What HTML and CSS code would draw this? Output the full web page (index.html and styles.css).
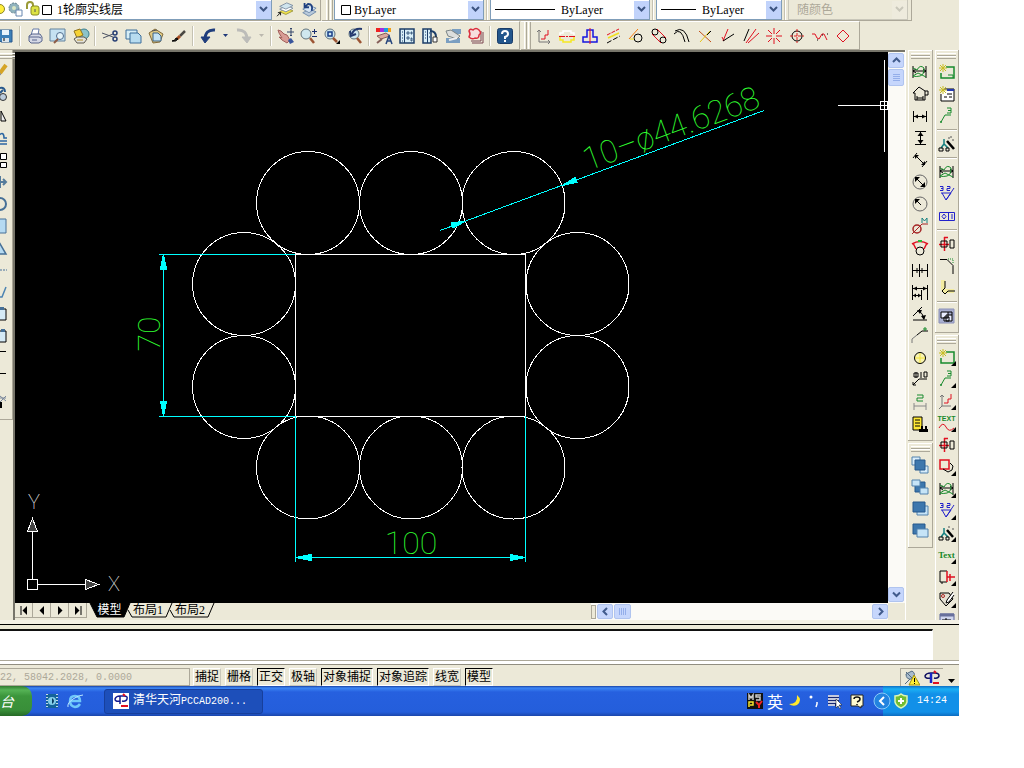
FILE: index.html
```html
<!DOCTYPE html>
<html lang="zh-CN">
<head>
<meta charset="utf-8">
<title>清华天河PCCAD</title>
<link rel="stylesheet" href="styles.css">
</head>
<body>
<div class="app">
  <header class="row-props">
    <div class="bar bar-layer">
      <div class="combo combo-layer">
        <svg class="layer-icons" viewBox="0 0 54 18"><circle cx="0" cy="8" r="4.500" fill="#ffee3b" stroke="#8b8425"/><circle cx="14" cy="7" r="5" fill="#8fb2bd" stroke="#62828e" stroke-dasharray="2 1"/><circle cx="14" cy="7" r="2" fill="#d8e6c3"/><path d="M16 9h6v6h-6z" fill="#fff" stroke="#6787b0"/><path d="M27 8V4q0-3 3-3t3 3v4" fill="none" stroke="#9a9a36" stroke-width="2"/><rect x="31" y="5" width="8" height="9" rx="2" fill="#dde344" stroke="#878a22"/><path d="M35 8v3" stroke="#555"/><path d="M42.500 4.500h9v9h-9z" fill="#fff" stroke="#000"/></svg>
        <select aria-label="图层"><option>1轮廓实线层</option></select>
        <span class="drop"><svg viewBox="0 0 9 7"><path d="M1 1l3.500 3.500L8 1"/></svg></span>
      </div>
      <button class="tool" aria-label="图层置为当前"><svg viewBox="0 0 18 18"><path d="M3 11l8-4 7 3-8 4z" fill="#f1e24a" stroke="#9b963f"/><path d="M3 8l8-4 7 3-8 4z" fill="#fff" stroke="#7b8ca0"/><path d="M3 5l8-4 7 3-8 4z" fill="#cfe4ee" stroke="#7b8ca0"/><path d="M0 16l4-4M1 12h3v3"/></svg></button>
      <button class="tool" aria-label="上一个图层"><svg viewBox="0 0 18 18"><path d="M2 12l8-4 7 3-8 5z" fill="#b9cadb" stroke="#6d88a8"/><path d="M2 8l8-4 7 3-8 5z" fill="#d8e7f5" stroke="#6d88a8"/><path d="M12 10q2-8-4-8L5 5M4 1v5h5" stroke="#1d3f80" stroke-width="2"/></svg></button>
    </div>
    <div class="bar bar-props">
      <span class="grip"></span>
      <div class="combo combo-color">
        <svg class="swatch" viewBox="0 0 10 10"><path d="M.5.500h9v9h-9z" fill="#fff" stroke="#000"/></svg>
        <select aria-label="颜色"><option>ByLayer</option></select>
        <span class="drop"><svg viewBox="0 0 9 7"><path d="M1 1l3.500 3.500L8 1"/></svg></span>
      </div>
      <span class="sep"></span>
      <div class="combo combo-type">
        <span class="line-sample"></span>
        <select aria-label="线型"><option>ByLayer</option></select>
        <span class="drop"><svg viewBox="0 0 9 7"><path d="M1 1l3.500 3.500L8 1"/></svg></span>
      </div>
      <span class="sep"></span>
      <div class="combo combo-weight">
        <span class="line-sample line-short"></span>
        <select aria-label="线宽"><option>ByLayer</option></select>
        <span class="drop"><svg viewBox="0 0 9 7"><path d="M1 1l3.500 3.500L8 1"/></svg></span>
      </div>
      <span class="sep"></span>
      <div class="combo combo-off">
        <select aria-label="打印样式" disabled><option>随颜色</option></select>
        <span class="drop"><svg viewBox="0 0 9 7"><path d="M1 1l3.500 3.500L8 1"/></svg></span>
      </div>
    </div>
  </header>

  <div class="row-tools">
    <div class="bar bar-std">
      <button class="tool" aria-label="保存"><svg viewBox="0 0 16 16"><path d="M1 2h13v12H3l-2-2z" fill="#3d80b8" stroke="#29598d"/><path d="M4 2h7v5H4z" fill="#e8f4fb" stroke="none"/><path d="M4 10h7v4H4z" fill="#dbe6ee" stroke="none"/><path d="M6 10v3"/></svg></button>
      <span class="sep"></span>
      <button class="tool" aria-label="打印"><svg viewBox="0 0 16 16"><path d="M4 7L6 1h6l-1 6" fill="#fff" stroke="#667ba8"/><path d="M2 8l3-2h8l2 3v4l-3 2H4l-2-2z" fill="#d5d9e6" stroke="#58658c"/><path d="M2 9h10l2 1M5 12h5" stroke="#58658c"/></svg></button>
      <button class="tool" aria-label="打印预览"><svg viewBox="0 0 16 16"><path d="M0 1h15v12H0z" fill="#c6e2f2" stroke="#62829d"/><circle cx="10" cy="8" r="3.500" fill="#e4f4fa" stroke="#516d8f"/><path d="M8 11l-4 4" stroke="#8d5b45" stroke-width="2"/></svg></button>
      <button class="tool" aria-label="发布"><svg viewBox="0 0 16 16"><circle cx="11" cy="6" r="5" fill="#8cc3c9" stroke="#3c7e8e"/><path d="M1 3l6-2 3 6-6 3z" fill="#f6d235" stroke="#91731d"/><path d="M1 11l3-2h7l3 2-3 4H4z" fill="#e3e2da" stroke="#5c5950"/><path d="M4 12h6" stroke="#b58d20"/></svg></button>
      <span class="sep"></span>
      <button class="tool" aria-label="剪切"><svg viewBox="0 0 16 16"><path d="M0 5l11 4M1 10l10-4" stroke="#4c5364"/><circle cx="13" cy="5" r="2" stroke="#273f74" stroke-width="1.500"/><circle cx="13" cy="11" r="2" stroke="#273f74" stroke-width="1.500"/></svg></button>
      <button class="tool" aria-label="复制"><svg viewBox="0 0 16 16"><path d="M1 2h11v9H1z" fill="#d5edf6" stroke="#3c6f9b"/><path d="M5 5h8l3 3v7H5z" fill="#b7dcf0" stroke="#3c6f9b"/></svg></button>
      <button class="tool" aria-label="粘贴"><svg viewBox="0 0 16 16"><path d="M1 5l6-4 8 5-3 8-7 1z" fill="#dfc984" stroke="#836b3a"/><path d="M5 5h5l3 3v5H5z" fill="#c4e3f4" stroke="#3c6385"/><path d="M4 3l5-1" stroke="#555"/></svg></button>
      <button class="tool" aria-label="特性匹配"><svg viewBox="0 0 16 16"><path d="M14 3L9 8" stroke="#4a4843" stroke-width="2.500"/><path d="M9 8l-3 3" stroke="#a84f23" stroke-width="3"/><path d="M7 11q-2 3-6 2 3 0 4-3z" fill="#222"/></svg></button>
      <span class="sep"></span>
      <button class="tool" aria-label="放弃"><svg viewBox="0 0 16 16"><path d="M15 2Q5 1 5 12" stroke="#1f3d7c" stroke-width="3"/><path d="M1 9l4 6 5-6z" fill="#1f3d7c" stroke="#1f3d7c"/></svg></button>
      <button class="tool tool-mini" aria-label="放弃列表"><svg viewBox="0 0 5 4"><path d="M0 0h5L2.500 3z" fill="#20397a" stroke="none"/></svg></button>
      <button class="tool" aria-label="重做" disabled><svg viewBox="0 0 16 16"><path d="M1 2Q11 1 11 12" stroke="#bcbcb9" stroke-width="3"/><path d="M6 9l5 6 4-6z" fill="#bcbcb9" stroke="#bcbcb9"/></svg></button>
      <button class="tool tool-mini" aria-label="重做列表" disabled><svg viewBox="0 0 5 4"><path d="M0 0h5L2.500 3z" fill="#bbb8ae" stroke="none"/></svg></button>
      <span class="sep"></span>
      <button class="tool" aria-label="实时平移"><svg viewBox="0 0 16 16"><path d="M0 2l3 1 3 3 3 1 3 5-3 3-5-3-3-3 3 1-3-5z" fill="#d99d95" stroke="#a4615c"/><path d="M10 12l3-2 3 4-4 2z" fill="#38559b" stroke="none"/><path d="M13 0v8M9 4h7M12 1l1-1 1 1M12 7l1 1 1-1" stroke="#33446a"/></svg></button>
      <button class="tool" aria-label="实时缩放"><svg viewBox="0 0 16 16"><circle cx="5" cy="6" r="5" fill="#cfe7ef" stroke="#61727c"/><path d="M9 10l4 5" stroke="#9b5433" stroke-width="2.500"/><path d="M11 3.500h5M13.500 1v5M11 8.500h5" stroke="#1a2f6e"/></svg></button>
      <button class="tool" aria-label="窗口缩放"><svg viewBox="0 0 16 16"><circle cx="6" cy="6" r="5" fill="#cfe7ef" stroke="#61727c"/><path d="M4 4h4v4H4z" stroke="#173d86" stroke-width="1.500"/><path d="M9 10l4 4" stroke="#9b5433" stroke-width="2.500"/><path d="M16 12v4h-4z" fill="#000" stroke="none"/></svg></button>
      <button class="tool" aria-label="缩放上一个"><svg viewBox="0 0 16 16"><circle cx="7" cy="6" r="5" fill="#cfe7ef" stroke="#61727c"/><path d="M10 10l4 5" stroke="#9b5433" stroke-width="2.500"/><path d="M15 1Q7 0 5 6M3 3l1 5 5-2" stroke="#24396f" stroke-width="2"/></svg></button>
      <span class="sep"></span>
      <button class="tool" aria-label="特性"><svg viewBox="0 0 16 16"><path d="M0 0h4v4H0z" fill="#e22" stroke="none"/><path d="M4 0h4v4H4z" fill="#a32de0" stroke="none"/><path d="M8 0h4v4H8z" fill="#1a9fe0" stroke="none"/><path d="M12 0h3v4h-3z" fill="#ef9f1a" stroke="none"/><path d="M1 8l9-3 4 3-9 3z" fill="#dca79b" stroke="#865f59"/><path d="M1 15l5-4" stroke="#865f59" stroke-width="2"/><path d="M10 16l3-8 3 8M11 13h4" stroke="#25457d" stroke-width="1.500"/></svg></button>
      <button class="tool" aria-label="设计中心"><svg viewBox="0 0 16 16"><path d="M1 1h14v14H1z" fill="#d8eef7" stroke="#1c3e68" stroke-width="1.500"/><path d="M3 4h1M3 7h1M3 10h1M3 13h1M5.500 1v14" stroke="#1c3e68"/><path d="M8 4h2v2H8zM12 4h1v2h-1zM8 9h2v2H8zM12 10h1v3h-1z" stroke="#1c3e68" stroke-width=".8"/></svg></button>
      <button class="tool" aria-label="工具选项板"><svg viewBox="0 0 16 16"><path d="M1 1h8v14H1z" fill="#d8eef7" stroke="#1c3e68" stroke-width="1.500"/><path d="M3 4h1M3 7h1M3 10h1M5.500 1v14M7 5h1M7 9h1" stroke="#1c3e68"/><path d="M8 3q6 0 6 6" stroke="#1c3e68" stroke-width="2"/><path d="M11 9h4v5h-4z" fill="#fff" stroke="#333"/></svg></button>
      <button class="tool" aria-label="图纸集"><svg viewBox="0 0 16 16"><path d="M1 10h14v5H1zM7 1h9v5H7z" fill="#7b9fc1" stroke="none"/><path d="M1 3l5-1 9 6-3 3-9-3z" fill="#dcdedc" stroke="#7c8587"/><path d="M4 12l8-2" stroke="#eee" stroke-width="2"/></svg></button>
      <button class="tool" aria-label="标记集"><svg viewBox="0 0 16 16"><path d="M4 15h11V4M3 13h10V3" stroke="#7a4550"/><path d="M1 3q1-3 4-1 3-3 6 0 3 3 0 5 0 4-4 3-3 2-6-1 2-3 0-6z" fill="#f6dfdd" stroke="#db2f3e" stroke-width="1.500"/></svg></button>
      <span class="sep"></span>
      <button class="tool" aria-label="帮助"><svg viewBox="0 0 16 16"><rect x=".5" y=".5" width="15" height="15" rx="2" fill="#23568c" stroke="#183b68"/><path d="M5 6q0-3 3-3t3 3q0 2-3 3v2M8 12v2" stroke="#fff" stroke-width="2"/></svg></button>
    </div>
    <div class="bar bar-draw">
      <span class="grip"></span>
      <button class="tool" aria-label="坐标"><svg viewBox="0 0 16 16"><path d="M3 2v12h11M1 4l2-2 2 2M12 12l2 2-2 2" stroke="#777"/><path d="M5 11h4V7h3V2" stroke="#e01020"/></svg></button>
      <button class="tool" aria-label="中心线"><svg viewBox="0 0 16 16"><path d="M1 7V5h3V3h8v2h3v2" stroke="#fff" stroke-width="1.500"/><path d="M1 9v3h3v2h8v-2h3V9" stroke="#f5e822" stroke-width="1.500"/><path d="M0 8.500h16" stroke="#e01020" stroke-dasharray="6 1 2 1"/></svg></button>
      <button class="tool" aria-label="对称线"><svg viewBox="0 0 16 16"><path d="M5 2h6v7h4v5H1V9h4z" stroke="#1616e0" stroke-width="1.500"/><path d="M8 0v16" stroke="#e01020"/></svg></button>
      <button class="tool" aria-label="平行线"><svg viewBox="0 0 16 16"><path d="M2 7l12-6" stroke="#e01020" stroke-dasharray="4 1"/><path d="M3 10l11-5" stroke="#f0df20" stroke-width="1.500"/><path d="M2 15l13-7" stroke-dasharray="5 2"/></svg></button>
      <button class="tool" aria-label="切线"><svg viewBox="0 0 16 16"><path d="M1 11l9-10" stroke="#f07a10"/><circle cx="10" cy="10" r="4"/><path d="M2 11h4" stroke="#f2df20"/></svg></button>
      <button class="tool" aria-label="公切线"><svg viewBox="0 0 16 16"><circle cx="4" cy="4" r="3"/><circle cx="12" cy="12" r="3"/><path d="M6 1l9 9M1 6l9 9" stroke="#e01020"/></svg></button>
      <button class="tool" aria-label="圆弧"><svg viewBox="0 0 16 16"><path d="M0 6q7-8 11 8M1 3q10-6 14 11"/></svg></button>
      <button class="tool" aria-label="修剪"><svg viewBox="0 0 16 16"><path d="M2 3l12 11" stroke="#c25015"/><path d="M13 3L3 14" stroke="#e5c514"/><path d="M10 7l4-4"/></svg></button>
      <button class="tool" aria-label="角度线"><svg viewBox="0 0 16 16"><path d="M8 1L3 13M2 9l2 4" stroke="#e01020"/><path d="M3 13l11-7"/></svg></button>
      <button class="tool" aria-label="角平分线"><svg viewBox="0 0 16 16"><path d="M1 13L6 1"/><path d="M3 15L13 1M5 15L16 5" stroke="#e01020"/></svg></button>
      <button class="tool" aria-label="放射线"><svg viewBox="0 0 16 16"><path d="M8 0v6M8 10v6M0 8h6M10 8h6M2 2l4 4M10 10l4 4M14 2l-4 4M6 10l-4 4" stroke="#e01020"/></svg></button>
      <button class="tool" aria-label="圆孔"><svg viewBox="0 0 16 16"><circle cx="8" cy="8" r="5"/><path d="M8 1v14M1 8h14" stroke="#d22" stroke-dasharray="3 1"/></svg></button>
      <button class="tool" aria-label="波浪线"><svg viewBox="0 0 16 16"><path d="M0 6h3l2 4 2 1 3-5 2 0 3 6" stroke="#e01020"/><path d="M5 12h1M10 7h1M15 6h1"/></svg></button>
      <button class="tool" aria-label="菱形"><svg viewBox="0 0 16 16"><path d="M8 2l6 6-6 6-6-6z" stroke="#e01020"/></svg></button>
    </div>
  </div>

  <main class="work">
    <aside class="dock-left">
      <div class="vbar vbar-left">
        <span class="hgrip"></span>
        <button class="tool" aria-label="删除"><svg viewBox="0 0 16 16"><path d="M15 1L9 9" stroke="#d5a425" stroke-width="4"/><path d="M9 9l-3 4" stroke="#777" stroke-width="3"/></svg></button>
        <button class="tool" aria-label="复制对象"><svg viewBox="0 0 16 16"><circle cx="12" cy="11" r="3.500" fill="#bcd" stroke="#333"/><path d="M9 2q5-1 5 4M9 7l3-3" stroke="#27588c" stroke-width="2"/></svg></button>
        <button class="tool" aria-label="镜像"><svg viewBox="0 0 16 16"><path d="M10 3l5 10h-5z" fill="#eee"/></svg></button>
        <button class="tool" aria-label="偏移"><svg viewBox="0 0 16 16"><path d="M8 5q5-4 5 3h3M8 11h8M8 14h8" stroke="#2b66a2" stroke-width="1.500"/></svg></button>
        <button class="tool" aria-label="阵列"><svg viewBox="0 0 16 16"><path d="M9.500 1.500h6v6h-6zM9.500 10.500h6v5h-6z" fill="#fff"/></svg></button>
        <button class="tool" aria-label="移动"><svg viewBox="0 0 16 16"><path d="M9 2v12M4 8h11M12 5l3 3-3 3" stroke="#557c9c" stroke-width="2"/></svg></button>
        <button class="tool" aria-label="旋转"><svg viewBox="0 0 16 16"><circle cx="9" cy="8" r="6" stroke="#467097" stroke-width="2"/></svg></button>
        <button class="tool" aria-label="缩放"><svg viewBox="0 0 16 16"><path d="M2 1h13v14H2z" fill="#b5daf2" stroke="#467097"/></svg></button>
        <button class="tool" aria-label="拉伸"><svg viewBox="0 0 16 16"><path d="M8 2l7 12H2z" fill="#b5daf2" stroke="#467097" stroke-width="1.500"/></svg></button>
        <button class="tool" aria-label="修剪对象"><svg viewBox="0 0 16 16"><path d="M3 8h13" stroke="#47709b" stroke-dasharray="2 1"/></svg></button>
        <button class="tool" aria-label="延伸"><svg viewBox="0 0 16 16"><path d="M8 13h3l4-10" stroke="#4c83b2" stroke-width="1.500"/></svg></button>
        <button class="tool" aria-label="打断于点"><svg viewBox="0 0 16 16"><path d="M2 3h13v11H2z" fill="#d5eaf5"/><path d="M9 1h4v3H9z" fill="#467097" stroke="none"/></svg></button>
        <button class="tool" aria-label="打断"><svg viewBox="0 0 16 16"><path d="M2 3h13v11H2z" fill="#d5eaf5"/><path d="M10 1h4v3h-4z" fill="#467097" stroke="none"/></svg></button>
        <button class="tool" aria-label="倒角"><svg viewBox="0 0 16 16"><path d="M2 1.500h13"/></svg></button>
        <button class="tool" aria-label="圆角"><svg viewBox="0 0 16 16"><path d="M2 1.500h13"/></svg></button>
        <button class="tool" aria-label="分解"><svg viewBox="0 0 16 16"><path d="M9 2l6 5M15 2L9 8M9 4h6" stroke="#7a879b"/><path d="M10 8v6" stroke-width="2"/></svg></button>
      </div>
    </aside>

    <section class="view">
      <svg class="drawing" viewBox="15 52 873 551" role="img" aria-label="图形">
        <g class="geo">
          <circle cx="308" cy="203" r="51.500"/><circle cx="411" cy="203" r="51.500"/><circle cx="513.500" cy="203" r="51.500"/>
          <circle cx="244" cy="284" r="51.500"/><circle cx="244" cy="387" r="51.500"/>
          <circle cx="577.500" cy="284" r="51.500"/><circle cx="577.500" cy="387" r="51.500"/>
          <circle cx="308" cy="467.500" r="51.500"/><circle cx="411" cy="467.500" r="51.500"/><circle cx="513.500" cy="467.500" r="51.500"/>
          <path d="M295.500 254.500h230v162h-230z"/>
          <path d="M838 105.500h42M884.500 60v41M884.500 110v42M880.500 101.500h7v8h-7zM880 105.500h8M884.500 101v9"/>
          <path d="M27.500 579.500h10v10h-10zM32.500 579v-48M38 584.500h47"/>
          <path class="ucs" d="M27.500 531.500h10l-5-13zM85.500 579.500v10l13-5z"/>
        </g>
        <g class="dim">
          <path d="M159 254.500h136M159 416.500h136M163.500 254v162M295.500 416v146M525.500 416v146M295 557.500h230M440 230.500L764 110.500"/>
          <path class="head" d="M163.500 254l3 15h-6zM163.500 416l3-15h-6zM296 557.500l15-3v6zM525 557.500l-15-3v6zM562 185.500l13-8 2 5zM466 221l-15 2 2 5z"/>
        </g>
        <g class="dim-text">
          <text x="411" y="554" text-anchor="middle">100</text>
          <text transform="translate(160 334) rotate(-90)" text-anchor="middle">70</text>
          <text transform="translate(588 171) rotate(-20.300)">10–ø44.6268</text>
        </g>
        <g class="axis-text"><text x="34" y="509" text-anchor="middle">Y</text><text x="114" y="591" text-anchor="middle">X</text></g>
      </svg>
      <div class="vscroll">
        <button class="sb" aria-label="向上"><svg viewBox="0 0 9 7"><path d="M1 5l3.500-3.500L8 5"/></svg></button>
        <span class="sb thumb"><svg viewBox="0 0 9 9"><path d="M1 1.500h7M1 3.500h7M1 5.500h7M1 7.500h7"/></svg></span>
        <span class="track"></span>
        <button class="sb" aria-label="向下"><svg viewBox="0 0 9 7"><path d="M1 1.500L4.500 5 8 1.500"/></svg></button>
      </div>
      <div class="tabs">
        <div class="tab-nav">
          <button aria-label="第一个"><svg viewBox="0 0 8 9"><path d="M1 0v9" /><path d="M7 0v9L2.500 4.500z" fill="#000" stroke="none"/></svg></button>
          <button aria-label="上一个"><svg viewBox="0 0 8 9"><path d="M6 0v9L1.500 4.500z" fill="#000" stroke="none"/></svg></button>
          <button aria-label="下一个"><svg viewBox="0 0 8 9"><path d="M2 0v9l4.500-4.500z" fill="#000" stroke="none"/></svg></button>
          <button aria-label="最后一个"><svg viewBox="0 0 8 9"><path d="M7 0v9"/><path d="M1 0v9l4.500-4.500z" fill="#000" stroke="none"/></svg></button>
        </div>
        <button class="tab tab-on"><svg viewBox="0 0 42 16"><path d="M0 0l7 14h27l6-14" fill="#000" stroke="#000"/></svg><span>模型</span></button>
        <button class="tab"><svg viewBox="0 0 42 16"><path d="M-3 7l4 7h34l6-14"/></svg><span>布局1</span></button>
        <button class="tab"><svg viewBox="0 0 42 16"><path d="M-3 7l4 7h34l6-14"/></svg><span>布局2</span></button>
        <div class="hscroll">
          <span class="split"></span>
          <button class="sb" aria-label="向左"><svg viewBox="0 0 7 9"><path d="M5 1L1.500 4.500 5 8"/></svg></button>
          <span class="sb thumb"><svg viewBox="0 0 9 9"><path d="M1.500 1v7M3.500 1v7M5.500 1v7M7.500 1v7"/></svg></span>
          <span class="track"></span>
          <button class="sb" aria-label="向右"><svg viewBox="0 0 7 9"><path d="M2 1l3.500 3.500L2 8"/></svg></button>
        </div>
      </div>
    </section>

    <aside class="dock-right">
      <div class="dock-col">
        <div class="vbar vbar-dim">
          <span class="hgrip"></span>
          <button class="tool" aria-label="智能标注"><svg viewBox="0 0 16 16"><path d="M1 2v12M14 2v12M1 7h13M4 5L1 7l3 2M11 5l3 2-3 2"/><path d="M1 4l4 2q3-6 7-2 0 7-4 8T1 12l5-3 8 4" stroke="#178a2c"/></svg></button>
          <button class="tool" aria-label="多边形标注"><svg viewBox="0 0 16 16"><path d="M1 7l6-6 6 4v9H3V7zM5 12h6M5 10v4M11 10v4M13 5h3v4h-3"/></svg></button>
          <button class="tool" aria-label="水平标注"><svg viewBox="0 0 16 16"><path d="M1.500 3v11M14.500 3v11M2 8.500h12"/><path d="M2 8.500l4-2v4zM14 8.500l-4-2v4z" fill="#000" stroke="none"/></svg></button>
          <button class="tool" aria-label="垂直标注"><svg viewBox="0 0 16 16"><path d="M3 1.500h11M3 14.500h11M8.500 2v12"/><path d="M8.500 2l3 4h-6zM8.500 14l3-4h-6z" fill="#000" stroke="none"/></svg></button>
          <button class="tool" aria-label="对齐标注"><svg viewBox="0 0 16 16"><path d="M5 1L1 6M15 9l-5 6M4 4l8 8"/><path d="M3 3h4L3 7zM13 13V9l-4 4z" fill="#000" stroke="none"/></svg></button>
          <button class="tool" aria-label="直径标注"><svg viewBox="0 0 16 16"><circle cx="8" cy="8" r="7" stroke="#666"/><path d="M4 4l8 8"/><path d="M3 3h5L3 8zM13 13V8l-5 5z" fill="#000" stroke="none"/></svg></button>
          <button class="tool" aria-label="半径标注"><svg viewBox="0 0 16 16"><circle cx="8" cy="8" r="7" stroke="#666"/><path d="M4 4l5 5"/><path d="M3 3h5L3 8z" fill="#000" stroke="none"/></svg></button>
          <button class="tool" aria-label="公制直径"><svg viewBox="0 0 16 16"><circle cx="5" cy="11" r="4" stroke="#a52525" stroke-width="1.500"/><path d="M0 16L10 6h6" stroke="#a52525"/><path d="M10 5V0l2.500 3L15 0v5" stroke="#168080"/></svg></button>
          <button class="tool" aria-label="弧长标注"><svg viewBox="0 0 16 16"><circle cx="8" cy="11" r="4"/><path d="M0 4q8-5 16 0M1 3l3 6M15 3l-3 6" stroke="#e01020" stroke-width="1.500"/><path d="M6 1h4" stroke="#1fbd33" stroke-width="2"/></svg></button>
          <button class="tool" aria-label="连续标注"><svg viewBox="0 0 16 16"><path d="M.5 2v13M7.500 2v13M15.500 2v13M1 8.500h14M5 6v5M10 6v5"/></svg></button>
          <button class="tool" aria-label="基线标注"><svg viewBox="0 0 16 16"><path d="M.5 1v15M9.500 6v10M15.500 1v15M1 4.500h14M1 11.500h8"/><path d="M1 4.500l4-2v4zM15 4.500l-4-2v4zM1 11.500l3-2v4zM9 11.500l-3-2v4z" fill="#000" stroke="none"/></svg></button>
          <button class="tool" aria-label="角度标注"><svg viewBox="0 0 16 16"><path d="M1 10L10 1M1 14h14M6 4q5 3 6 9"/><path d="M5 4l5 0-2 4zM12 14l-3-4 5-1z" fill="#000" stroke="none"/></svg></button>
          <button class="tool" aria-label="倒角标注"><svg viewBox="0 0 16 16"><path d="M0 15V11l5-4" stroke="#777"/><path d="M5 7l5-4h6"/><path d="M12 0h2v2h-2z" stroke="#178a2c"/></svg></button>
          <button class="tool" aria-label="圆心标记"><svg viewBox="0 0 16 16"><circle cx="8" cy="8" r="5.500" fill="#f8f3b0"/><path d="M8 3v10M3 8h10" stroke="#f2e43c"/></svg></button>
          <button class="tool" aria-label="引线标注"><svg viewBox="0 0 16 16"><path d="M1 13l6-6h8M1 10v3h3"/><path d="M4 0v6M2 1h4v4H2zM9 0v6M12 0h3v5h-3z"/></svg></button>
          <button class="tool" aria-label="尺寸编辑"><svg viewBox="0 0 16 16"><path d="M2 16V9M14 16V9M2 12h12" stroke="#888"/><path d="M5 1h6v3H5v3h6" stroke="#178a2c"/></svg></button>
          <button class="tool" aria-label="标注样式"><svg viewBox="0 0 16 16"><path d="M1 1h9v13H1z" fill="#ffe934"/><path d="M3 4h5M3 7h5M3 10h5"/><path d="M7 13h9v3H7zM9 10h2v3H9zM13 10h2v3h-2z" fill="#000" stroke="none"/></svg></button>
        </div>
        <div class="vbar">
          <span class="hgrip"></span>
          <button class="tool" aria-label="前置"><svg viewBox="0 0 16 16"><path d="M0 0h8v8H0zM8 9h8v7H8z" fill="#d8edfb" stroke="#5282ad"/><path d="M3 3h10v10H3z" fill="#3d77ad" stroke="#27588c"/></svg></button>
          <button class="tool" aria-label="后置"><svg viewBox="0 0 16 16"><path d="M3 3h10v10H3z" fill="#3d77ad" stroke="#27588c"/><path d="M0 1h8v6H0zM8 9h8v6H8z" fill="#c6e4f7" stroke="#5282ad"/></svg></button>
          <button class="tool" aria-label="置于对象之上"><svg viewBox="0 0 16 16"><path d="M5 5h11v9H5z" fill="#c6e4f7" stroke="#5282ad"/><path d="M1 1h12v10H1z" fill="#3d77ad" stroke="#27588c"/></svg></button>
          <button class="tool" aria-label="置于对象之下"><svg viewBox="0 0 16 16"><path d="M1 1h12v10H1z" fill="#3d77ad" stroke="#27588c"/><path d="M5 6h11v8H5z" fill="#c6e4f7" stroke="#5282ad"/></svg></button>
        </div>
      </div>
      <div class="dock-col">
        <div class="vbar vbar-pc">
          <span class="hgrip"></span>
          <button class="tool" aria-label="图幅设置"><svg viewBox="0 0 16 16"><path d="M7 3h8v11H2V9" stroke="#178a2c" stroke-width="1.500"/><path d="M9 11h5v3" stroke="#178a2c"/><path d="M4 0v8M0 4h8M1 1l6 6M7 1L1 7" stroke="#c9bd22"/></svg></button>
          <button class="tool" aria-label="标题栏"><svg viewBox="0 0 16 16"><path d="M5 3h10v12H2V8" fill="#fff"/><path d="M8 4h7" stroke="#2438b0" stroke-width="2"/><path d="M8 8h5M5 11h3M10 11h3"/><path d="M4 0v8M0 4h8M1 1l6 6M7 1L1 7" stroke="#c9bd22"/></svg></button>
          <button class="tool" aria-label="序号"><svg viewBox="0 0 16 16"><path d="M2 14l4-7h6" stroke="#178a2c"/><path d="M8 0h4v5H8M9 2.500h3" stroke="#178a2c"/><circle cx="2" cy="14" r="1" fill="#178a2c" stroke="none"/></svg></button>
          <span class="hsep"></span>
          <button class="tool" aria-label="超级编辑"><svg viewBox="0 0 16 16"><path d="M8 5l7 8" stroke-width="2.500"/><path d="M5 3v5M2 12l3-4 4 4" stroke="#168080" stroke-width="1.500"/><path d="M0 12h4v3H0zM7 12h3v3H7z"/><path d="M9 2h2M13 4h2M12 0v2" stroke="#555"/></svg></button>
          <span class="hsep"></span>
          <button class="tool" aria-label="尺寸"><svg viewBox="0 0 16 16"><path d="M1 2v12M14 2v12M1 7h13M4 5L1 7l3 2M11 5l3 2-3 2"/><path d="M1 4l4 2q3-6 7-2 0 7-4 8T1 12l5-3 8 4" stroke="#178a2c"/></svg></button>
          <button class="tool" aria-label="粗糙度"><svg viewBox="0 0 16 16"><path d="M2 7h10l-5 7-4-7M7 14l8-12M1 .5h3v4H1M2 2.500h2M8 .5h3v2H8v2h3" stroke="#2222cc"/></svg></button>
          <button class="tool" aria-label="形位公差"><svg viewBox="0 0 16 16"><path d="M.5 4.500h15v8H.5zM9.500 4v9M5 6l2 2.500L5 11 3 8.500zM13 6v5" stroke="#2222cc"/></svg></button>
          <span class="hsep"></span>
          <button class="tool" aria-label="孔轴"><svg viewBox="0 0 16 16"><path d="M0 8.500h10M5.500 1v14M5 1.500h4" stroke="#e01020" stroke-width="1.500"/><path d="M2 5h6v6H2zM11 4h4v8h-4z"/></svg></button>
          <button class="tool" aria-label="倒圆角"><svg viewBox="0 0 16 16"><path d="M1 1.500h7l6 6V16"/><path d="M9 1h5v5" stroke="#178a2c" stroke-dasharray="1 1"/></svg></button>
          <button class="tool" aria-label="工艺槽"><svg viewBox="0 0 16 16"><path d="M4 0v9l2 2h9" stroke="#f3eca0" stroke-width="4"/><path d="M6 1v7l-3 3 3 3 3-3h7"/></svg></button>
          <span class="hsep"></span>
          <button class="tool" aria-label="图库"><svg viewBox="0 0 16 16"><path d="M0 1h15v14H0z" fill="#a9afd0" stroke="#8a90b8"/><path d="M2 4h7v6H2zM7 7h6v6H7zM5 9h5v4H5z" fill="#e9edff"/><path d="M9 4h4v3"/></svg></button>
        </div>
        <div class="vbar vbar-fly">
          <span class="hgrip"></span>
          <button class="tool fly" aria-label="图幅"><svg viewBox="0 0 16 16"><path d="M7 3h8v11H2V9" stroke="#178a2c" stroke-width="1.500"/><path d="M4 0v8M0 4h8M1 1l6 6M7 1L1 7" stroke="#c9bd22"/></svg></button>
          <button class="tool fly" aria-label="序号工具"><svg viewBox="0 0 16 16"><path d="M2 14l4-7h6" stroke="#178a2c"/><path d="M8 0h4v5H8M9 2.500h3" stroke="#178a2c"/><circle cx="2" cy="14" r="1" fill="#178a2c" stroke="none"/></svg></button>
          <button class="tool fly" aria-label="坐标工具"><svg viewBox="0 0 16 16"><path d="M3 2v11h9M1 4l2-2 2 2M3 13l-3 3" stroke="#777"/><path d="M5 10h4V6h3V1" stroke="#e01020"/></svg></button>
          <button class="tool fly tool-text" aria-label="文字工具"><span class="tiny">TEXT</span><svg viewBox="0 0 16 8"><path d="M0 5q4-7 7-1t8 1" stroke="#e01020"/></svg></button>
          <button class="tool" aria-label="孔轴工具"><svg viewBox="0 0 16 16"><path d="M0 8.500h10M5.500 1v14M5 1.500h4" stroke="#e01020" stroke-width="1.500"/><path d="M2 5h6v6H2zM11 4h4v8h-4z"/></svg></button>
          <button class="tool fly" aria-label="放大图"><svg viewBox="0 0 16 16"><path d="M1 1h9v9H1z" stroke="#e01020" stroke-width="1.500"/><path d="M11 4l3 3-1 4-4 2-5-3" /></svg></button>
          <button class="tool fly" aria-label="尺寸工具"><svg viewBox="0 0 16 16"><path d="M1 2v12M14 2v12M1 7h13M4 5L1 7l3 2M11 5l3 2-3 2"/><path d="M1 4l4 2q3-6 7-2 0 7-4 8T1 12l5-3 8 4" stroke="#178a2c"/></svg></button>
          <button class="tool fly" aria-label="粗糙度工具"><svg viewBox="0 0 16 16"><path d="M2 7h10l-5 7-4-7M7 14l8-12M1 .5h3v4H1M2 2.500h2M8 .5h3v2H8v2h3" stroke="#2222cc"/></svg></button>
          <button class="tool fly" aria-label="编辑工具"><svg viewBox="0 0 16 16"><path d="M8 5l6 7" stroke-width="2.500"/><path d="M5 3v5M2 12l3-4 4 4" stroke="#168080" stroke-width="1.500"/><path d="M0 12h4v3H0zM7 12h3v3H7z"/><path d="M9 2h2M13 4h2" stroke="#555"/></svg></button>
          <button class="tool fly tool-text" aria-label="文字"><span class="small-text">Text</span></button>
          <button class="tool fly" aria-label="轴工具"><svg viewBox="0 0 16 16"><path d="M8 2H1v11h7M3 13v2"/><path d="M8 2v11M11 5v7M8 8h8" stroke="#e01020" stroke-width="1.500"/></svg></button>
          <button class="tool fly" aria-label="标签工具"><svg viewBox="0 0 16 16"><path d="M1 2h9l4 6-7 7-6-7z" fill="#e3e0d3"/><path d="M14 1L8 9l-1 3 3-1 5-7" fill="#fff"/><circle cx="4" cy="5" r="1.500" stroke="#a22"/></svg></button>
          <button class="tool" aria-label="图库工具"><svg viewBox="0 0 16 16"><path d="M1 1h14v14H1z" fill="#cfd5ed" stroke="#596399"/><path d="M1 2h14" stroke="#68709c" stroke-width="3"/><path d="M3 7h9v6H3zM7 5v8"/></svg></button>
        </div>
      </div>
    </aside>
  </main>

  <div class="command">
    <input class="command-input" type="text" aria-label="命令行">
  </div>

  <div class="status">
    <output class="coords">22, 58042.2028, 0.0000</output>
    <div class="modes">
      <button>捕捉</button><button>栅格</button><button class="on">正交</button><button>极轴</button><button class="on">对象捕捉</button><button class="on">对象追踪</button><button>线宽</button><button class="on">模型</button>
    </div>
    <div class="status-tray">
      <svg viewBox="0 0 16 16"><path d="M2 2l7 7M8 1q5 3 0 8-6 1-6-5z" fill="#a9bccd" stroke="#526b83"/><path d="M1 14l5-5" stroke="#526b83"/><path d="M10 5l6 10H5z" fill="#fe3" stroke="#a29012"/><path d="M10.500 8v4M10.500 13v1" stroke="#000"/></svg>
      <svg viewBox="0 0 16 16"><path d="M7 8q-6 1-6-2 1-3 6-3h4q4 0 4 3-1 3-5 2" fill="none" stroke="#101060" stroke-width="1.500"/><path d="M7 3v10" stroke="#1825c5" stroke-width="2.500"/><path d="M9 13h6M10 1l2 2" stroke="#e01020" stroke-width="2"/></svg>
    </div>
    <button class="status-menu" aria-label="状态栏菜单"><svg viewBox="0 0 7 4"><path d="M0 0h7L3.500 4z"/></svg></button>
  </div>

  <footer class="taskbar">
    <button class="start">台</button>
    <div class="quick">
      <button aria-label="媒体播放器"><svg viewBox="0 0 16 16"><path d="M2 1h12v14H2z" fill="#14639b"/><path d="M3 1v14M13 1v14" stroke="#fff" stroke-width="1.500" stroke-dasharray="1 2"/><circle cx="8" cy="8" r="4" fill="#81cce9"/><path d="M8 5q4 3 0 6" fill="#08385f"/></svg></button>
      <button aria-label="浏览器"><svg viewBox="0 0 16 16"><path d="M13 11q-2 3-5 3-5-1-5-6t5-5 5 5H4" fill="none" stroke="#70c8fa" stroke-width="2.500"/><path d="M1 14q-1-4 5-8t10-4" fill="none" stroke="#b8e5ff"/></svg></button>
    </div>
    <button class="task"><svg viewBox="0 0 16 16"><path d="M0 0h16v16H0z" fill="#fff"/><path d="M7 8Q2 9 2 6q1-3 5-3h4q4 0 3 3-1 3-5 2M7 3v8" fill="none" stroke="#131b91" stroke-width="1.500"/><path d="M10 1l2 2M8 13h7" stroke="#e01020" stroke-width="2"/></svg><span>清华天河<span class="mono">PCCAD200...</span></span></button>
    <div class="lang">
      <svg viewBox="0 0 16 16"><path d="M0 0h16v16H0z" fill="#111"/><path d="M2 7V2l2 3 2-3v5M14 2H9v2h4v3H9" fill="none" stroke="#ccc" stroke-width="1.500"/><path d="M2 14V9h4v3H3" fill="none" stroke="#f6e52b" stroke-width="1.500"/><path d="M9 9l3 3 3-4M12 12v3" fill="none" stroke="#ef2222" stroke-width="2"/></svg>
      <span class="ying">英</span>
      <svg viewBox="0 0 16 16"><path d="M10 2q6 5 0 10-4 2-8-1 9 0 8-9z" fill="#ffe92c"/></svg>
      <svg viewBox="0 0 16 16"><circle cx="4" cy="4" r="1.500" fill="#fff"/><path d="M10 9v2l-1 3" fill="none" stroke="#fff" stroke-width="1.500"/></svg>
      <svg viewBox="0 0 16 16"><path d="M1 2h11v11H1z" fill="#162774"/><path d="M1 3h11M1 6h11M1 9h9M1 12h7" stroke="#fff" stroke-width="1.500"/><path d="M9 6v9l2-2 2 3 1-1-2-3h3z" fill="#fff" stroke="#111" stroke-width=".5"/></svg>
      <svg class="lang-help" viewBox="0 0 16 16"><path d="M2 2h12v11h-2v2l-3-2H2z" fill="#fffad1" stroke="#222"/><path d="M5 6q0-2 3-2t3 2-3 3M8 11v1" fill="none" stroke="#111" stroke-width="1.500"/></svg>
    </div>
    <div class="tray">
      <button class="expand" aria-label="显示隐藏的图标"><svg viewBox="0 0 18 18"><circle cx="9" cy="9" r="8" fill="#2383df" stroke="#8ac9f9"/><path d="M11 5L7 9l4 4" fill="none" stroke="#fff" stroke-width="2"/></svg></button>
      <svg class="shield" viewBox="0 0 16 16"><path d="M2 3q4 0 6-2 2 2 6 2v6q-1 4-6 6-5-2-6-6z" fill="#72bd34" stroke="#dcf5b6" stroke-width="1.500"/><path d="M8 5v6M5 8h6" stroke="#fff" stroke-width="2"/></svg>
      <time>14:24</time>
    </div>
  </footer>
</div>
</body>
</html>
```
FILE: styles.css
```css
* { box-sizing: border-box; }
body { margin: 0; background: #fff; overflow: hidden; }
button, select, input { font: inherit; color: inherit; margin: 0; padding: 0; border: 0; background: none; border-radius: 0; }
button { display: flex; align-items: center; justify-content: center; flex: none; }
svg { display: block; flex: none; }

.app {
  display: flex; flex-direction: column;
  height: calc(100vh - 52px); margin-right: 65px;
  background: #ece9d8; overflow: hidden;
  font: 12px/16px "Liberation Serif", "Noto Sans CJK SC", serif; color: #000;
}

/* toolbars */
.row-props, .row-tools { display: flex; flex: none; gap: 1px; }
.row-props { height: 21px; }
.row-tools { height: 29px; }
.bar { display: flex; align-items: center; border-right: 1px solid #aca899; border-bottom: 1px solid #aca899; border-top: 1px solid #fff; }
.row-props .bar { border-top: 0; }
.bar-layer { width: 321px; gap: 1px; }
.bar-props { width: 590px; padding-left: 4px; }
.bar-std { width: 520px; }
.bar-std > .tool:first-child { margin-left: -6px; }
.bar-draw { width: 339px; padding-left: 3px; }
.grip { width: 8px; height: 100%; flex: none; background: linear-gradient(90deg, #fff 1px, #ece9d8 1px 2px, #aca899 2px 3px, transparent 3px 4px, #fff 4px 5px, #ece9d8 5px 6px, #aca899 6px 7px, transparent 7px); }
.sep { width: 6px; height: 20px; flex: none; background: linear-gradient(90deg, transparent 2px, #c5c2b2 2px 3px, #fff 3px 4px, transparent 4px); }
.tool { width: 23px; height: 22px; position: relative; }
.tool svg { width: 16px; height: 16px; fill: none; stroke: #000; overflow: visible; }
.tool-mini { width: 13px; }
.tool-mini svg { width: 5px; height: 4px; }

.combo { display: flex; align-items: center; height: 20px; align-self: flex-start; background: #fff; border-bottom: 1px solid #7f9db9; border-right: 1px solid #7f9db9; border-left: 1px solid #7f9db9; }
.combo select { flex: 1; min-width: 0; height: 18px; appearance: none; }
.combo-layer { flex: 1; border-left: 0; }
.layer-icons { width: 54px; height: 18px; margin-right: 3px; }
.combo-color { width: 150px; }
.swatch { width: 10px; height: 10px; margin: 0 3px 0 6px; }
.combo-type { width: 160px; }
.combo-weight { width: 126px; }
.combo-off { width: 120px; color: #aca899; background: #ece9d8; border-color: #c9c7ba; padding-left: 8px; }
.combo-off select { opacity: 1; }
.line-sample { width: 60px; height: 1px; margin: 0 6px 0 4px; background: #000; }
.line-short { width: 35px; }
.drop { display: flex; align-items: center; justify-content: center; width: 15px; height: 18px; background: #c1d3fb; pointer-events: none; }
.drop svg { width: 9px; height: 7px; fill: none; stroke: #3c5480; stroke-width: 2; }
.combo-off .drop { background: #eeebdd; }
.combo-off .drop svg { stroke: #c9c7ba; }

/* work area */
.work { display: flex; flex: 1; min-height: 0; overflow: hidden; }
.dock-left { width: 15px; flex: none; border-right: 2px solid #77756a; }
.vbar-left { width: 13px; padding-bottom: 6px; border-right: 1px solid #aca899; border-bottom: 1px solid #aca899; }
.vbar-left .tool { width: 17px; }
.view { display: grid; grid-template-columns: 1fr 17px; grid-template-rows: 1fr 17px; flex: 1; min-width: 0; border-top: 2px solid #77756a; }
.drawing { width: 100%; height: 100%; min-height: 0; background: #000; }
.geo { fill: none; stroke: #fff; shape-rendering: crispEdges; }
.ucs { fill: #444; }
.dim { fill: none; stroke: #0ff; shape-rendering: crispEdges; }
.head { fill: #0ff; }
.dim-text { font: 100 32px Roboto, Lato, sans-serif; fill: #30ff30; }
.axis-text { font: 100 20px Roboto, Lato, sans-serif; fill: #fff; }

.vscroll { display: flex; flex-direction: column; background: #fbfaf6; padding: 1px 0; gap: 1px; }
.track { flex: 1; }
.sb { display: flex; align-items: center; justify-content: center; flex: none; width: 16px; height: 15px; background: #c6d6fc; border: 1px solid #b0c4ef; border-radius: 2px; }
.sb svg { width: 9px; height: 9px; fill: none; stroke: #415b8c; stroke-width: 2; }
.thumb { height: 17px; }
.thumb svg { stroke: #94aeea; stroke-width: 1; }
.hscroll .thumb { width: 17px; height: 15px; }
.tabs { display: flex; align-items: stretch; }
.tab-nav { display: flex; margin-right: 3px; }
.tab-nav button { width: 18px; height: 15px; border: solid #aca899; border-width: 0 1px 1px 0; }
.tab-nav svg { width: 8px; height: 9px; stroke: #000; }
.tab { position: relative; width: 42px; height: 16px; line-height: 14px; padding-right: 8px; padding-bottom: 2px; }
.tab svg { position: absolute; left: 0; top: 0; width: 42px; height: 16px; fill: none; stroke: #000; overflow: visible; }
.tab span { position: relative; }
.tab-on { color: #fff; width: 41px; padding-right: 2px; }
.hscroll { display: flex; align-items: center; gap: 1px; width: 34%; margin-left: auto; background: #fbfaf6; }
.split { width: 5px; height: 14px; background: #ece9d8; border: 1px solid #aca899; }

.dock-right { display: flex; flex: none; gap: 2px; padding-left: 2px; border-left: 1px solid #fff; }
.dock-col { display: flex; flex-direction: column; gap: 2px; width: 25px; }
.dock-col + .dock-col { width: 24px; }
.vbar { display: flex; flex-direction: column; align-items: center; flex: none; }
.dock-right .vbar { border: solid #aca899; border-width: 0 1px 1px 0; padding-bottom: 5px; box-shadow: inset 1px 1px #fff; }
.vbar .tool { flex: none; }
.vbar-left .tool { align-self: flex-end; margin-right: 5px; }
.hgrip { width: 19px; height: 6px; margin: 3px 0 2px; flex: none; background: linear-gradient(#fff 1px, transparent 1px 2px, #aca899 2px 3px, #fff 3px 4px, transparent 4px 5px, #aca899 5px); }
.hsep { width: 20px; height: 6px; flex: none; background: linear-gradient(transparent 2px, #aca899 2px 3px, #fff 3px 4px, transparent 4px); }
.fly::after { content: ""; position: absolute; right: 2px; bottom: 2px; width: 5px; height: 5px; background: #000; clip-path: polygon(100% 0, 100% 100%, 0 100%); }
.tool-text { flex-direction: column; color: #178a2c; }
.tool-text svg { height: 8px; }
.tiny { font: bold 7px/8px "Liberation Sans", sans-serif; }
.small-text { font: bold 9px/12px "Liberation Serif", serif; }

/* command line */
.command { flex: none; display: flex; height: 45px; padding: 5px 26px 4px 0; border-top: 4px solid #f4f1e6; border-bottom: 1px solid #918e81; background: linear-gradient(#000 1px, #ece9d8 1px calc(100% - 4px), #aca899 calc(100% - 4px) calc(100% - 3px), #fff calc(100% - 3px)); }
.command-input { flex: 1; background: #fff; border-top: 2px solid #111; border-right: 1px solid #fff; }

/* status bar */
.status { display: flex; align-items: center; flex: none; height: 21px; padding-top: 2px; }
.coords { width: 190px; height: 18px; border: solid #aca899; border-width: 1px 1px 1px 0; color: #aca899; font: 10px/18px "Liberation Mono", monospace; margin-right: 3px; white-space: nowrap; }
.modes { display: flex; gap: 4px; }
.modes button { height: 18px; padding: 1px 1px 0; border: 1px solid; border-color: #fff #c9c7ba #c9c7ba #fff; }
.modes .on { border-color: #000 #fff #fff #000; }
.status-tray { display: flex; gap: 4px; height: 18px; padding: 1px 3px; margin-left: auto; border: solid #aca899; border-width: 1px 0 0 1px; }
.status-tray svg { width: 16px; height: 16px; }
.status-menu { width: 16px; height: 10px; align-self: flex-end; }
.status-menu svg { width: 7px; height: 4px; }

/* taskbar */
.taskbar { display: flex; align-items: center; flex: none; height: 30px; color: #fff; background: linear-gradient(#1941a5, #3c87f5 2px, #2660df 6px, #245edb 26px, #1b46ab); }
.start { width: 32px; height: 100%; justify-content: flex-start; font: italic 14px/20px "Noto Sans CJK SC", sans-serif; background: linear-gradient(#2f7a2f, #56b356 4px, #3c963c 10px, #398f39 24px, #266a26); border-radius: 0 10px 10px 0; }
.quick { display: flex; gap: 7px; margin: 0 21px 0 12px; }
.quick svg, .lang svg, .task svg, .shield { width: 16px; height: 16px; }
.task { width: 159px; height: 25px; justify-content: flex-start; gap: 4px; padding-left: 8px; background: #1d4fba; border: 1px solid #173f9c; border-radius: 3px; }
.mono { font: 10px/16px "Liberation Mono", monospace; }
.lang { display: flex; align-items: center; gap: 4px; margin-left: auto; margin-right: 18px; }
.lang .lang-help { margin-left: 2px; }
.ying { font: 16px/20px "Noto Sans CJK SC", sans-serif; }
.tray { display: flex; align-items: center; height: 100%; width: 76px; background: linear-gradient(#0f6fc5, #1bb0f4 3px, #1290e8 8px, #1290e8 26px, #0d6cc0); }
.expand { margin-left: -10px; }
.expand svg { width: 18px; height: 18px; }
.shield { margin: 0 8px 0 2px; }
.tray time { font: 10px/16px "Liberation Mono", monospace; }
```
